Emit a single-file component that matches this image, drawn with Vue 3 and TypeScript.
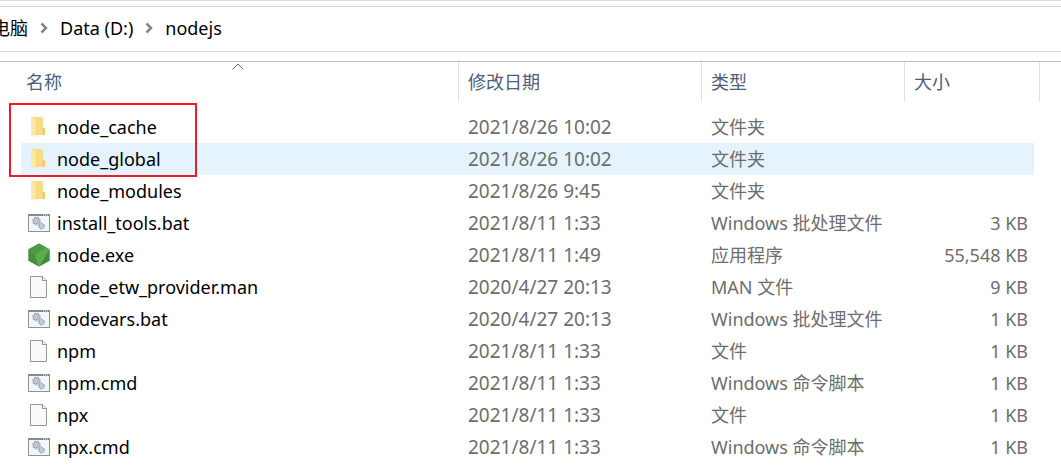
<script setup lang="ts">
type Icon = 'folder' | 'script' | 'node' | 'page'

interface Entry {
  name: string
  icon: Icon
  modified: string
  type: string
  size?: string
  hovered?: boolean
}

const columns = ['修改日期', '类型']

const entries: Entry[] = [
  { name: 'node_cache', icon: 'folder', modified: '2021/8/26 10:02', type: '文件夹' },
  { name: 'node_global', icon: 'folder', modified: '2021/8/26 10:02', type: '文件夹', hovered: true },
  { name: 'node_modules', icon: 'folder', modified: '2021/8/26 9:45', type: '文件夹' },
  { name: 'install_tools.bat', icon: 'script', modified: '2021/8/11 1:33', type: 'Windows 批处理文件', size: '3 KB' },
  { name: 'node.exe', icon: 'node', modified: '2021/8/11 1:49', type: '应用程序', size: '55,548 KB' },
  { name: 'node_etw_provider.man', icon: 'page', modified: '2020/4/27 20:13', type: 'MAN 文件', size: '9 KB' },
  { name: 'nodevars.bat', icon: 'script', modified: '2020/4/27 20:13', type: 'Windows 批处理文件', size: '1 KB' },
  { name: 'npm', icon: 'page', modified: '2021/8/11 1:33', type: '文件', size: '1 KB' },
  { name: 'npm.cmd', icon: 'script', modified: '2021/8/11 1:33', type: 'Windows 命令脚本', size: '1 KB' },
  { name: 'npx', icon: 'page', modified: '2021/8/11 1:33', type: '文件', size: '1 KB' },
  { name: 'npx.cmd', icon: 'script', modified: '2021/8/11 1:33', type: 'Windows 命令脚本', size: '1 KB' },
]
</script>

<template>
  <main class="explorer">
    <nav class="address" aria-label="路径">
      <a class="crumb first" href="#">电脑</a>
      <svg class="chevron" viewBox="0 0 8 12" aria-hidden="true"><path d="M1.5 1.5 6 6l-4.500 4.500" /></svg>
      <a class="crumb" href="#">Data (D:)</a>
      <svg class="chevron" viewBox="0 0 8 12" aria-hidden="true"><path d="M1.5 1.5 6 6l-4.500 4.500" /></svg>
      <a class="crumb" href="#">nodejs</a>
    </nav>

    <section class="listing">
      <table>
        <colgroup>
          <col />
          <col class="col-date" />
          <col class="col-type" />
          <col class="col-size" />
          <col class="col-edge" />
        </colgroup>
        <thead>
          <tr>
            <th class="name-head" aria-sort="ascending">
              <svg class="sort" viewBox="0 0 12 7" aria-hidden="true"><path d="M.7 6.300 6 1l5.300 5.300" /></svg>
              <button type="button">名称</button>
            </th>
            <th v-for="column in columns" :key="column"><button type="button">{{ column }}</button></th>
            <th colspan="2"><button type="button">大小</button></th>
          </tr>
        </thead>
        <tbody>
          <tr v-for="entry in entries" :key="entry.name" :class="{ hovered: entry.hovered }">
            <td class="name">
              <div class="file">
                <svg v-if="entry.icon === 'folder'" class="icon" viewBox="0 0 24 24" aria-hidden="true">
                  <path d="M4 2h12v10l2 1.500V20H8z" fill="#f8dc88" />
                  <path d="M15.500 12.500 18 14v6h-2.500z" fill="#efca6c" />
                  <path d="M4 2l5.500 3.500V19L9 22l-5-2.500z" fill="#fee9a6" />
                  <path d="M9.500 5.500V19L9 22V5.200z" fill="#ecc970" />
                </svg>
                <svg v-else-if="entry.icon === 'script'" class="icon" viewBox="0 0 24 24" aria-hidden="true">
                  <rect x="1.500" y="3.500" width="21" height="17" fill="#f5f6f6" stroke="#8d9192" />
                  <path d="M1 3h22v2H1z" fill="#858989" />
                  <path d="M16 4h1m1 0h1m1 0h1" stroke="#eee" />
                  <g fill="none" stroke="#9aa8b3">
                    <circle cx="9.500" cy="10" r="3.900" stroke-width="1" stroke-dasharray="1.700 1.363" />
                    <circle cx="9.500" cy="10" r="2.900" stroke-width="1.200" fill="#dfe4e8" />
                    <circle cx="9.500" cy="10" r="1" fill="#fff" />
                    <circle cx="14.500" cy="15" r="3.200" stroke-width="1" stroke-dasharray="1.300 1.213" />
                    <circle cx="14.500" cy="15" r="2.300" fill="#d3e8f4" />
                    <circle cx="14.500" cy="15" r=".6" fill="#fff" />
                  </g>
                </svg>
                <svg v-else-if="entry.icon === 'node'" class="icon" viewBox="0 0 24 24" aria-hidden="true">
                  <path d="m12 .5 10.500 5.700v11.600L12 23.500 1.500 17.800V6.200z" fill="#57a446" />
                  <path d="M12 .5 1.500 6.200 8 12 19 4.300z" fill="#4b9b45" />
                  <path d="M1.500 6.200 8 12l4 11.500-10.500-5.700z" fill="#45913f" />
                  <path d="M22.500 6.200v11.600L12 23.500z" fill="#408a3e" />
                  <path d="M19 4.300 22.500 6.200 12 23.500 8 12z" fill="#5fac48" />
                </svg>
                <svg v-else class="icon" viewBox="0 0 24 24" aria-hidden="true">
                  <path d="M3.500 1.500h12l4 4v17h-16z" fill="#f8f9f9" stroke="#929595" />
                  <path d="M15.500 1.500v4h4" fill="#fff" stroke="#929595" />
                </svg>
                <span>{{ entry.name }}</span>
              </div>
            </td>
            <td class="date">{{ entry.modified }}</td>
            <td>{{ entry.type }}</td>
            <td class="size">{{ entry.size }}</td>
            <td class="edge"></td>
          </tr>
        </tbody>
      </table>
      <div class="marker" aria-hidden="true"></div>
    </section>
  </main>
</template>

<style>
body {
  margin: 0;
  background: #fff;
}
</style>

<style scoped>
.explorer {
  overflow: hidden;
  border-top: 1px solid #d9d9d9;
  color: #000;
  font-family: "Noto Sans", "Noto Sans CJK SC", sans-serif;
  font-size: 18px;
  line-height: 24px;
}

.address {
  display: flex;
  align-items: center;
  height: 42px;
  margin-top: 5px;
  padding-bottom: 2px;
  border-top: 1px solid #d9d9d9;
  border-bottom: 1px solid #d9d9d9;
}

.crumb {
  color: inherit;
  text-decoration: none;
  white-space: nowrap;
}

.first {
  margin-left: -8px;
}

.chevron {
  width: 8px;
  height: 12px;
  margin: 0 12px;
  fill: none;
  stroke: #858585;
  stroke-width: 2.5;
}

.listing {
  position: relative;
  margin-top: 9px;
  padding: 0 21px;
  border-top: 1px solid #b9bcbc;
}

table {
  width: 100%;
  table-layout: fixed;
  border-collapse: separate;
  border-spacing: 0;
}

.col-date {
  width: 243px;
}

.col-type {
  width: 203px;
}

.col-size {
  width: 129px;
}

.col-edge {
  width: 6px;
}

th {
  position: relative;
  box-sizing: border-box;
  height: 40px;
  padding: 0 9px;
  border-right: 1px solid #e2e2e2;
  font-weight: 400;
  text-align: left;
}

.name-head {
  padding-left: 5px;
}

th button {
  padding: 0;
  border: 0;
  background: none;
  color: #4c607a;
  font: inherit;
}

.sort {
  position: absolute;
  top: 1px;
  left: 50%;
  width: 12px;
  height: 7px;
  margin-left: -8px;
  fill: none;
  stroke: #666;
}

tbody::before {
  display: block;
  height: 9px;
  content: "";
}

td {
  box-sizing: border-box;
  height: 32px;
  padding: 0 9px;
  color: #6d6d6d;
  white-space: nowrap;
}

td.name {
  padding-left: 6px;
  color: #000;
}

.date {
  font-size: 19px;
}

.size {
  padding-right: 6px;
  text-align: right;
}

.edge {
  padding: 0;
}

.hovered td:not(.edge) {
  background: #e5f3ff;
}

.file {
  display: flex;
  align-items: center;
  gap: 6px;
}

.icon {
  flex: none;
  width: 24px;
  height: 24px;
}

.marker {
  position: absolute;
  top: 41px;
  left: 9px;
  box-sizing: border-box;
  width: 188px;
  height: 74px;
  border: 2px solid #ed1c24;
}
</style>
